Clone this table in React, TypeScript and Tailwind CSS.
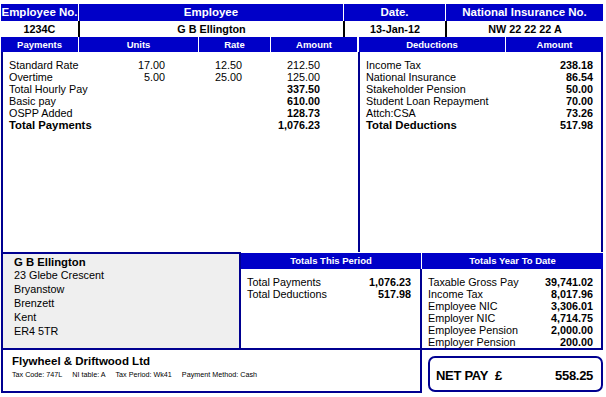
import React from "react";

const BLUE = "bg-[#0000c8]";

function Hdr({ w, children, cls = "" }: { w: string; children: React.ReactNode; cls?: string }) {
  return (
    <div className={`${w} ${BLUE} flex items-center justify-center text-white font-bold ${cls}`}>{children}</div>
  );
}

const payments = [
  { l: "Standard Rate", u: "17.00", r: "12.50", a: "212.50", b: false },
  { l: "Overtime", u: "5.00", r: "25.00", a: "125.00", b: false },
  { l: "Total Hourly Pay", u: "", r: "", a: "337.50", b: false, ab: true },
  { l: "Basic pay", u: "", r: "", a: "610.00", b: false, ab: true },
  { l: "OSPP Added", u: "", r: "", a: "128.73", b: false, ab: true },
  { l: "Total Payments", u: "", r: "", a: "1,076.23", b: true, ab: true },
];

const deductions = [
  { l: "Income Tax", a: "238.18", b: false },
  { l: "National Insurance", a: "86.54", b: false },
  { l: "Stakeholder Pension", a: "50.00", b: false },
  { l: "Student Loan Repayment", a: "70.00", b: false },
  { l: "Attch:CSA", a: "73.26", b: false },
  { l: "Total Deductions", a: "517.98", b: true },
];

const ytd = [
  ["Taxable Gross Pay", "39,741.02"],
  ["Income Tax", "8,017.96"],
  ["Employee NIC", "3,306.01"],
  ["Employer NIC", "4,714.75"],
  ["Employee Pension", "2,000.00"],
  ["Employer Pension", "200.00"],
];

export default function App() {
  return (
    <div className="w-[606px] h-[397px] bg-white text-black font-['Liberation_Sans',Arial,sans-serif] overflow-hidden">
      <div className="pt-[4px] pl-[1px] w-[603px]">
        {/* Row 1 */}
        <div className="flex h-[17px] gap-[1px] text-[11.5px] leading-none">
          <Hdr w="w-[77px]">Employee No.</Hdr>
          <Hdr w="w-[264px]">Employee</Hdr>
          <Hdr w="w-[101px]">Date.</Hdr>
          <Hdr w="w-[157px]">National Insurance No.</Hdr>
        </div>
        {/* Row 2 */}
        <div className="flex h-[16px] text-[10.8px] font-bold leading-none">
          <div className="w-[77px] flex items-center justify-center">1234C</div>
          <div className="w-[265px] border-l-2 border-black flex items-center justify-center">G B Ellington</div>
          <div className="w-[102px] border-l-2 border-black flex items-center justify-center">13-Jan-12</div>
          <div className="w-[158px] border-l-2 border-black flex items-center justify-center">NW 22 22 22 A</div>
        </div>
        {/* Row 3 */}
        <div className="flex h-[15px] text-[9.5px] leading-none">
          <div className="flex gap-[1px] w-[356px]">
            <Hdr w="w-[77px]">Payments</Hdr>
            <Hdr w="w-[119px]">Units</Hdr>
            <Hdr w="w-[71px]">Rate</Hdr>
            <Hdr w="w-[86px]">Amount</Hdr>
          </div>
          <div className="w-[2px]" />
          <div className="flex gap-[1px] w-[244px]">
            <Hdr w="w-[146px]">Deductions</Hdr>
            <Hdr w="w-[97px]">Amount</Hdr>
          </div>
        </div>
        {/* Body */}
        <div className="flex h-[200px] text-[10.8px] leading-[12px]">
          <div className="w-[357px] border-l-2 border-[#000090] pt-[7px] pl-[6px]">
            {payments.map((p) => (
              <div key={p.l} className="flex h-[12px]">
                <div className={`w-[111px] whitespace-nowrap ${p.b ? "font-bold text-[11.3px]" : ""}`}>{p.l}</div>
                <div className="w-[45px] text-right">{p.u}</div>
                <div className="w-[77px] text-right">{p.r}</div>
                <div className={`w-[78px] text-right ${p.ab ? "font-bold" : ""}`}>{p.a}</div>
              </div>
            ))}
          </div>
          <div className="w-[245px] border-l-2 border-r-2 border-[#000090] pt-[7px] pl-[6px] pr-[8px]">
            {deductions.map((d) => (
              <div key={d.l} className="flex h-[12px] justify-between">
                <div className={`whitespace-nowrap ${d.b ? "font-bold text-[11.3px]" : ""}`}>{d.l}</div>
                <div className="font-bold">{d.a}</div>
              </div>
            ))}
          </div>
        </div>
        {/* Bottom section */}
        <div className="flex h-[98px]">
          <div className="w-[240px] border-2 border-[#000090] bg-[#efefef] pl-[11px] pt-[3px] text-[10.8px]">
            <div className="font-bold text-[11.3px] leading-[11px]">G B Ellington</div>
            <div className="leading-[14px]">23 Glebe Crescent</div>
            <div className="leading-[14px]">Bryanstow</div>
            <div className="leading-[14px]">Brenzett</div>
            <div className="leading-[14px]">Kent</div>
            <div className="leading-[14px]">ER4 5TR</div>
          </div>
          <div className="w-[181px] flex flex-col">
            <div className="h-[16px] mt-[1px] mr-[1px] bg-[#0000c8] text-white font-bold text-[9.5px] flex items-center justify-center leading-none">
              Totals This Period
            </div>
            <div className="flex-1 border-r-2 border-b-2 border-[#000090] pt-[7px] pl-[6px] pr-[9px] text-[10.8px] leading-[12px]">
              <div className="flex justify-between h-[12px]">
                <span>Total Payments</span>
                <span className="font-bold">1,076.23</span>
              </div>
              <div className="flex justify-between h-[12px]">
                <span>Total Deductions</span>
                <span className="font-bold">517.98</span>
              </div>
            </div>
          </div>
          <div className="w-[181px] flex flex-col">
            <div className="h-[16px] mt-[1px] bg-[#0000c8] text-white font-bold text-[9.5px] flex items-center justify-center leading-none">
              Totals Year To Date
            </div>
            <div className="flex-1 border-r-2 border-b-2 border-[#000090] pt-[7px] pl-[6px] pr-[8px] text-[10.8px] leading-[12px]">
              {ytd.map(([l, v]) => (
                <div key={l} className="flex justify-between h-[12px]">
                  <span>{l}</span>
                  <span className="font-bold">{v}</span>
                </div>
              ))}
            </div>
          </div>
        </div>
        {/* Footer */}
        <div className="flex">
          <div className="w-[421px] h-[43px] border-l-2 border-r-2 border-b-2 border-[#000090] pl-[9px] pt-[4px]">
            <div className="font-bold text-[11.5px] leading-[14px]">Flywheel &amp; Driftwood Ltd</div>
            <div className="flex gap-[10px] text-[7.2px] leading-[10px] mt-[2px] whitespace-nowrap">
              <span>Tax Code: 747L</span>
              <span>NI table: A</span>
              <span>Tax Period: Wk41</span>
              <span>Payment Method: Cash</span>
            </div>
          </div>
          <div className="ml-[6px] mt-[6px] w-[175px] h-[36px] rounded-[7px] border-2 border-[#000090] flex items-center pl-[6px] pr-[8px] pt-[4px] font-bold text-[13px] tracking-[-0.3px]">
            <span>NET PAY</span>
            <span className="ml-[7px]">£</span>
            <span className="ml-auto">558.25</span>
          </div>
        </div>
      </div>
    </div>
  );
}
